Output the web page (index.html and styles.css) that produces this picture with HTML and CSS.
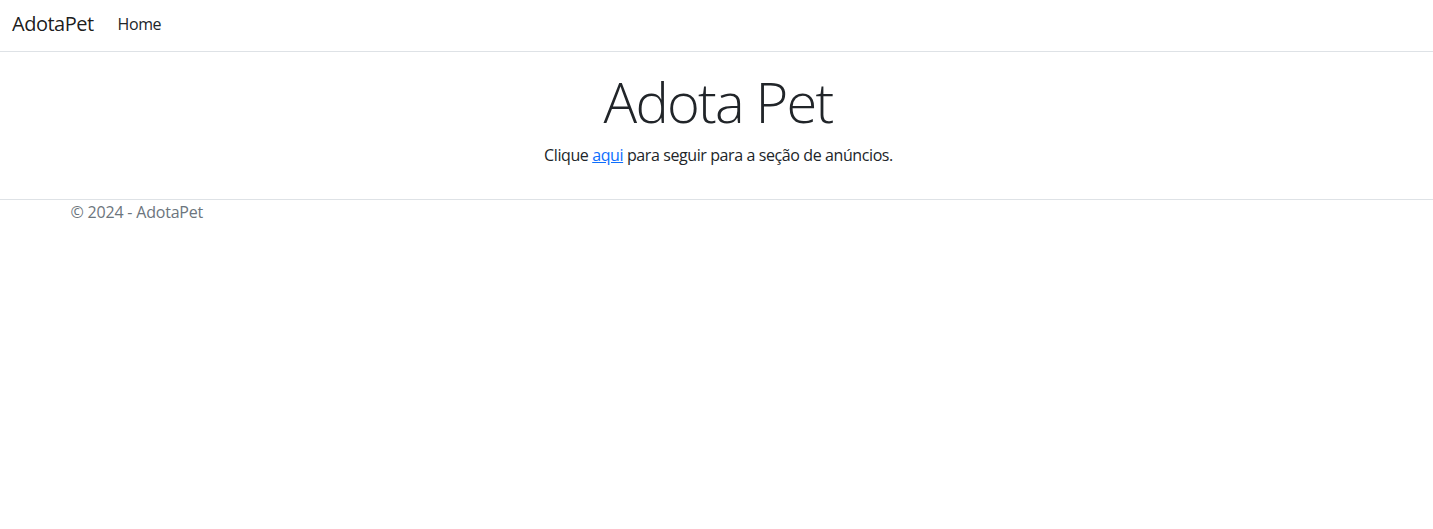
FILE: index.html
```html
<!DOCTYPE html>
<html lang="pt-br">
<head>
<meta charset="utf-8">
<title>AdotaPet</title>
<link rel="stylesheet" href="styles.css">
</head>
<body>
<header>
  <nav class="navbar">
    <div class="navbar-inner">
      <a class="brand" href="#">AdotaPet</a>
      <ul class="nav">
        <li><a class="nav-link" href="#">Home</a></li>
      </ul>
    </div>
  </nav>
</header>
<div class="container">
  <main class="main">
    <div class="text-center">
      <h1 class="display">Adota Pet</h1>
      <p class="lead-text">Clique <a href="#" class="link">aqui</a> para seguir para a seção de anúncios.</p>
    </div>
  </main>
</div>
<footer class="footer">
  <div class="container footer-text">&copy; 2024 - AdotaPet</div>
</footer>
</body>
</html>
```

FILE: styles.css
```css
* { box-sizing: border-box; }
html { font-size: 16px; }
body {
  margin: 0;
  font-family: "Open Sans", "Noto Sans", sans-serif;
  font-size: 16px;
  line-height: 1.5;
  color: #212529;
  background: #fff;
  letter-spacing: -0.4px;
}
.navbar {
  height: 52px;
  border-bottom: 1px solid #dee2e6;
  background: #fff;
  margin-bottom: 16px;
}
.navbar-inner {
  height: 51px;
  display: flex;
  align-items: center;
  padding: 0 12px 4px;
}
.brand {
  font-size: 20px;
  color: rgba(0,0,0,.9);
  text-decoration: none;
  margin-right: 16px;
  letter-spacing: -0.5px;
}
.nav {
  list-style: none;
  margin: 0;
  padding: 0;
  display: flex;
}
.nav-link {
  display: block;
  padding: 0 8px;
  color: #212529;
  text-decoration: none;
  font-size: 16px;
}
.container {
  max-width: 1320px;
  margin: 0 auto;
  padding: 0 12px;
}
.main { padding-bottom: 16px; }
.text-center { text-align: center; }
.display {
  font-size: 56px;
  font-weight: 300;
  line-height: 1.2;
  margin: 0 0 8px;
  letter-spacing: -1.8px;
  padding-left: 3px;
}
.lead-text { margin: 0 0 16px; padding-left: 4px; }
.link { color: #0d6efd; text-decoration: underline; }
.footer {
  border-top: 1px solid #dee2e6;
  color: #6c757d;
  line-height: 24px;
}
.footer-text {
  padding-left: 14px;
  letter-spacing: -0.2px;
}
```
